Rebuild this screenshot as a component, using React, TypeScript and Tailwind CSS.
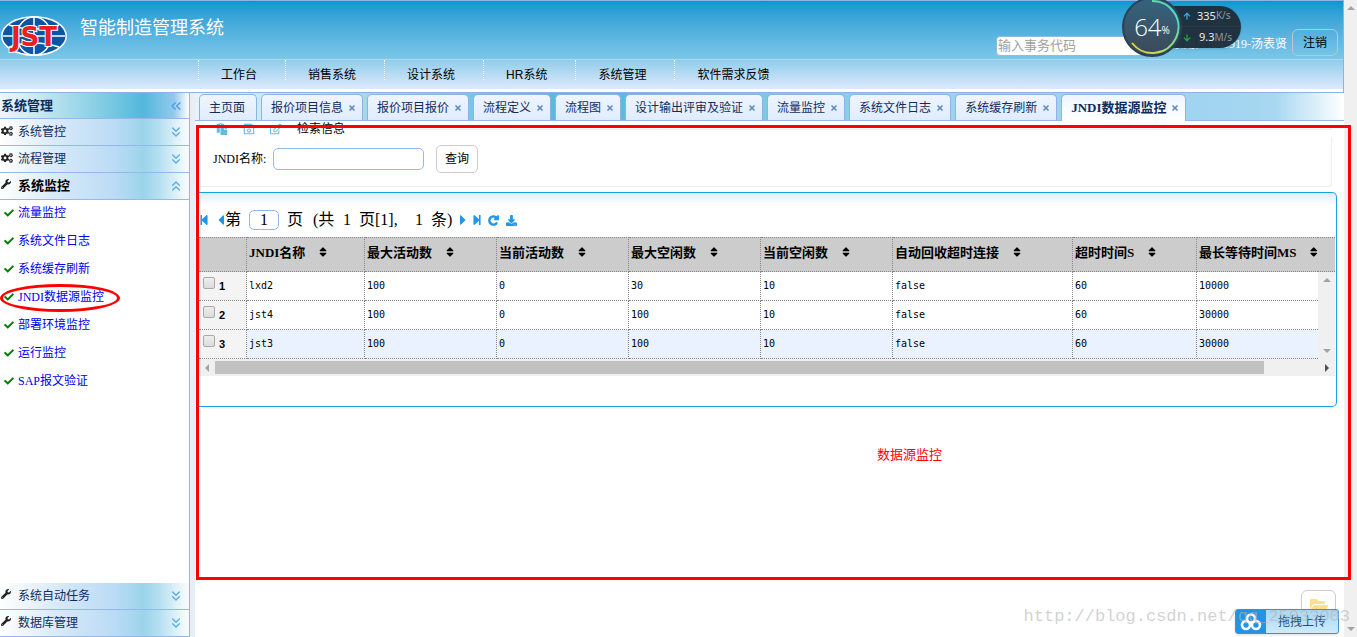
import React from 'react';
import { ChevronsDown, ChevronsLeft, ChevronsUp } from 'lucide-react';
import {
  FaArrowDown,
  FaArrowUp,
  FaCaretLeft,
  FaCaretRight,
  FaCheck,
  FaCogs,
  FaDownload,
  FaFolderOpen,
  FaPaste,
  FaRegEdit,
  FaRegSave,
  FaSort,
  FaStepBackward,
  FaStepForward,
  FaWrench,
} from 'react-icons/fa';
import { FaArrowRotateRight } from 'react-icons/fa6';

const navItems = ['工作台', '销售系统', '设计系统', 'HR系统', '系统管理', '软件需求反馈'];

const links = ['流量监控', '系统文件日志', '系统缓存刷新', 'JNDI数据源监控', '部署环境监控', '运行监控', 'SAP报文验证'];

const tabs = ['主页面', '报价项目信息', '报价项目报价', '流程定义', '流程图', '设计输出评审及验证', '流量监控', '系统文件日志', '系统缓存刷新', 'JNDI数据源监控'];

const columns = [
  { title: 'JNDI名称', width: 'w-[118px]' },
  { title: '最大活动数', width: 'w-[132px]' },
  { title: '当前活动数', width: 'w-[132px]' },
  { title: '最大空闲数', width: 'w-[132px]' },
  { title: '当前空闲数', width: 'w-[132px]' },
  { title: '自动回收超时连接', width: 'w-[180px]' },
  { title: '超时时间S', width: 'w-[124px]' },
  { title: '最长等待时间MS', width: '' },
];

const rows = [
  ['lxd2', '100', '0', '30', '10', 'false', '60', '10000'],
  ['jst4', '100', '0', '100', '10', 'false', '60', '30000'],
  ['jst3', '100', '0', '100', '10', 'false', '60', '30000'],
];

function Logo() {
  return (
    <svg viewBox="0 0 68 42" className="h-[42px] w-[68px] shrink-0">
      <ellipse cx="34" cy="21" rx="33" ry="20" fill="#fff" />
      <ellipse cx="34" cy="21" rx="31.5" ry="18.5" fill="#0a55a5" />
      <g fill="none" stroke="#fff" strokeWidth="1.5">
        <path d="M34 2v38M3 21h62M9 10q25 8 50 0M9 32q25-8 50 0" />
        <ellipse cx="34" cy="21" rx="17" ry="19" />
      </g>
      <text
        x="34"
        y="31"
        textAnchor="middle"
        fill="#ee1c25"
        stroke="#fff"
        strokeWidth="2"
        className="font-['DejaVu_Sans'] text-[26px] font-bold [paint-order:stroke]"
      >
        JST
      </text>
    </svg>
  );
}

function AccordionHeader({ title, icon, open }: { title: string; icon: 'cogs' | 'wrench'; open?: boolean }) {
  return (
    <button
      className={`flex h-[27px] w-full shrink-0 items-center border-b border-[#95b8e7] bg-[linear-gradient(90deg,#fff_0%,#d3e6f8_35%,#b9dbf5_62%,#9bd4ea_76%,#b4dff0_84%,#f4fafd_98%)] pr-[5px] text-left ${
        open ? 'text-[13px] font-bold text-black' : 'text-[#0e2d5f]'
      }`}
    >
      <span className="w-[18px] self-start pt-1.5 pl-px text-[#222]">
        {icon === 'cogs' ? <FaCogs className="h-3 w-3" /> : <FaWrench className="h-2.5 w-2.5" />}
      </span>
      <span className="flex-1">{title}</span>
      {open ? (
        <ChevronsUp className="h-4 w-4 text-[#55aee8]" />
      ) : (
        <ChevronsDown className="h-4 w-4 text-[#55aee8]" />
      )}
    </button>
  );
}

function Sidebar() {
  return (
    <aside className="flex w-[190px] shrink-0 flex-col border-r border-[#95b8e7]">
      <div className="flex h-[26px] shrink-0 items-center justify-between border-b border-[#95b8e7] bg-[linear-gradient(90deg,#eef6fd_0%,#c9e8f3_20%,#8bd0e6_50%,#52b8dc_76%,#94c8ed_92%,#fff_100%)] pr-[5px] pl-px">
        <h2 className="text-[13px] font-bold text-[#0e2d5f]">系统管理</h2>
        <ChevronsLeft className="h-4 w-4 text-[#4c9fe0]" />
      </div>
      <AccordionHeader title="系统管控" icon="cogs" />
      <AccordionHeader title="流程管理" icon="cogs" />
      <AccordionHeader title="系统监控" icon="wrench" open />
      <ul className="flex-1 pt-px">
        {links.map((label) => (
          <li key={label} className="relative mb-1 flex h-6 items-center pl-1">
            <FaCheck className="mr-1 h-2.5 w-2.5 text-[#008000]" />
            <a href="#" className="text-[#0000ee]">
              {label}
            </a>
            {label === 'JNDI数据源监控' && (
              <span className="absolute -top-px left-0 h-7 w-[120px] rounded-[50%] border-3 border-[#fe0000]" />
            )}
          </li>
        ))}
      </ul>
      <AccordionHeader title="系统自动任务" icon="wrench" />
      <AccordionHeader title="数据库管理" icon="wrench" />
    </aside>
  );
}

function SpeedBall() {
  return (
    <div className="absolute top-[-4px] left-[1122px] z-20 h-[60px] w-[119px]">
      <div className="absolute top-[9px] right-0 flex h-[42px] w-[80px] flex-col rounded-r-full bg-[#1d2b38]/95 pl-[22px] font-['Noto_Sans'] text-[11px] text-[#e8eef2] shadow">
        <div className="flex h-[21px] items-center border-b border-[#2b3b48]">
          <FaArrowUp className="h-2 w-2 text-[#36a9ee]" />
          <span className="ml-1.5">335</span>
          <span className="text-[10px] text-[#8d99a3]">K/s</span>
        </div>
        <div className="flex h-[21px] items-center">
          <FaArrowDown className="h-2 w-2 text-[#23a53c]" />
          <span className="ml-2">9.3</span>
          <span className="text-[10px] text-[#8d99a3]">M/s</span>
        </div>
      </div>
      <svg viewBox="0 0 60 60" className="absolute top-0 left-0 h-[60px] w-[60px]">
        <defs>
          <linearGradient id="ring" x1="1" y1="0" x2="0" y2="1">
            <stop offset="0" stopColor="#2ed6e6" />
            <stop offset=".5" stopColor="#8fe07c" />
            <stop offset="1" stopColor="#f0cf3c" />
          </linearGradient>
          <linearGradient id="ball" x1="0" y1="0" x2="0" y2="1">
            <stop offset="0" stopColor="#34647f" />
            <stop offset="1" stopColor="#3c4857" />
          </linearGradient>
        </defs>
        <circle cx="30" cy="30" r="29" fill="url(#ball)" stroke="#2b4254" strokeWidth="2" />
        <path d="M30 4A26 26 0 1 1 10 46" fill="none" stroke="url(#ring)" strokeWidth="2" />
      </svg>
      <div className="absolute top-0 left-0 flex h-[60px] w-[60px] items-center justify-center font-['Open_Sans'] text-white">
        <span className="text-2xl font-light">64</span>
        <span className="pt-2 text-[10px]">%</span>
      </div>
    </div>
  );
}

function Header() {
  return (
    <header className="relative border-y border-r border-[#8db2e3] bg-white pb-[3px]">
      <div className="flex h-[58px] items-center bg-linear-to-b from-[#0698d1] to-[#7cc7e8] pr-[5px]">
        <div className="flex flex-1 items-center gap-3 pt-3">
          <Logo />
          <h1 className="pb-4 text-[18px] text-white">智能制造管理系统</h1>
        </div>
        <div className="flex items-end self-end pb-[3px]">
          <input
            aria-label="输入事务代码"
            placeholder="输入事务代码"
            className="mr-2 h-5 w-[151px] rounded border border-[#95b8e7] bg-white px-px text-[13px] placeholder:text-[#a0a0a0]"
          />
          <span className="mr-[5px] w-[132px] text-right leading-6 whitespace-nowrap text-white">登录用户:003919-汤表贤</span>
          <button className="h-[27px] w-[46px] rounded-md border border-[#bcc8cc] text-black">注销</button>
        </div>
      </div>
      <nav className="flex h-[30px] items-start border-t border-[#a9dbf2] bg-linear-to-b from-[#90cdea] to-[#dde9fd] pl-[198px] font-['Liberation_Sans','Noto_Sans_CJK_SC',sans-serif]">
        {navItems.map((item) => (
          <a key={item} href="#" className="h-5 border-l border-dotted border-white pt-1.5 pr-7 pl-[22px] leading-[18px] text-black">
            {item}
          </a>
        ))}
      </nav>
      <SpeedBall />
    </header>
  );
}

function TabBar() {
  return (
    <div className="flex h-7 shrink-0 items-end gap-1 border-b border-[#95b8e7] bg-[linear-gradient(90deg,#e6f3fb_0%,#a3d8ec_15%,#56bbdf_31%,#5abddf_38%,#7ccae6_50%,#9ad3ee_65%,#a0d4f0_88%,#a8d8f1_94%,#fff_100%)] pl-1">
      {tabs.map((tab, i) => {
        const active = i === tabs.length - 1;
        return (
          <div
            key={tab}
            className={`flex items-center gap-1 rounded-t-[5px] border border-b-0 border-[#8db2e3] pl-[9px] whitespace-nowrap text-[#0e2d5f] ${
              active
                ? '-mb-px h-[27px] bg-linear-to-b from-[#eff5ff] to-white text-[13px] font-bold'
                : 'h-[26px] bg-linear-to-b from-[#eff5ff] to-[#e0ecff]'
            } ${i === 0 ? 'pr-[11px]' : 'pr-[5px]'}`}
          >
            <a href="#">{tab}</a>
            {i > 0 && (
              <button aria-label={`关闭${tab}`} className="flex h-2.5 w-2.5 items-center justify-center">
                <svg viewBox="0 0 8 8" className="h-2 w-2">
                  <path d="M1.5 1.5l5 5M6.5 1.5l-5 5" stroke="#5c86c0" strokeWidth="1.5" />
                </svg>
              </button>
            )}
          </div>
        );
      })}
    </div>
  );
}

function SearchForm() {
  return (
    <section className="mr-3">
      <div className="flex h-4 items-center gap-[15px] pl-[17px] text-[#62bddf]">
        <FaPaste className="h-3 w-3" />
        <FaRegSave className="h-3 w-3" />
        <FaRegEdit className="h-3 w-3" />
        <h2 className="text-black">检索信息</h2>
        <span className="h-px flex-1 bg-[#eee]" />
      </div>
      <form className="flex h-[50px] items-start rounded-b border-r border-b border-[#eee] pt-2 pl-3.5">
        <label htmlFor="jndi" className="w-[60px] leading-7">
          JNDI名称:
        </label>
        <input id="jndi" className="mt-[3px] h-[22px] w-[151px] rounded-[5px] border border-[#95b8e7] px-1" />
        <button type="button" className="ml-3 h-7 w-[42px] rounded-[5px] border border-[#ccc] text-black">
          查询
        </button>
      </form>
    </section>
  );
}

function Pager() {
  return (
    <div className="flex h-11 items-center pt-2.5 text-[16px] text-black">
      <button aria-label="首页" className="w-[13px] text-[#1e96ea]">
        <FaStepBackward className="h-3 w-2.5" />
      </button>
      <button aria-label="上一页" className="w-3 pl-1 text-[#1e96ea]">
        <FaCaretLeft className="h-4 w-2.5" />
      </button>
      <label htmlFor="page" className="ml-px">第</label>
      <input
        id="page"
        defaultValue="1"
        className="mx-2 h-5 w-[30px] rounded-[5px] border border-[#95b8e7] text-center"
      />
      <span className="w-[26px]">页</span>
      <span className="w-[30px]">(共</span>
      <span className="w-4">1</span>
      <span className="w-14">页[1],</span>
      <span className="w-4">1</span>
      <span className="w-[27px]">条)</span>
      <button aria-label="下一页" className="w-[14px] text-[#1e96ea]">
        <FaCaretRight className="h-4 w-2.5" />
      </button>
      <button aria-label="末页" className="w-4 text-[#1e96ea]">
        <FaStepForward className="h-3 w-2.5" />
      </button>
      <button aria-label="刷新" className="w-[18px] text-[#1e96ea]">
        <FaArrowRotateRight className="h-[11px] w-[11px] [stroke-width:50] [stroke:currentColor]" />
      </button>
      <button aria-label="下载" className="text-[#1e96ea]">
        <FaDownload className="h-[11px] w-[11px]" />
      </button>
    </div>
  );
}

function DataGrid() {
  return (
    <>
      <table className="w-full table-fixed border-separate border-spacing-0 text-left">
        <thead className="bg-[#ccc]">
          <tr className="h-[35px]">
            <th className="w-12 border-t border-r border-b border-dotted border-[#888]" />
            {columns.map((col, i) => (
              <th
                key={col.title}
                className={`border-t border-b border-dotted border-[#888] p-0 pb-1 pl-[2px] ${col.width} ${
                  i < columns.length - 1 ? 'border-r' : ''
                }`}
              >
                <span className="flex items-center text-[13px] font-bold whitespace-nowrap text-black">
                  {col.title}
                  <FaSort className="ml-3 h-3 w-3" />
                </span>
              </th>
            ))}
            <th className="w-[17px] border-t border-b border-dotted border-[#888] p-0" />
          </tr>
        </thead>
        <tbody>
          {rows.map((row, r) => (
            <tr key={row[0]} className={`h-[29px] ${r === 2 ? 'bg-[#eaf2ff]' : 'bg-white'}`}>
              <td className="border-r border-b border-dotted border-[#888] bg-[#f4f4f4] p-0 pl-1 font-['Liberation_Sans'] text-[11px] font-bold">
                <label className="flex items-center gap-1">
                  <input
                    type="checkbox"
                    className="mb-1.5 h-3 w-3 appearance-none rounded-[2px] border border-[#a9a9a9] bg-linear-to-b from-[#eee] to-[#dcdcdc]"
                  />
                  {r + 1}
                </label>
              </td>
              {row.map((cell, c) => (
                <td
                  key={c}
                  className={`border-b border-dotted border-[#888] p-0 pl-[2px] font-['DejaVu_Sans_Mono'] text-[10px] text-black ${
                    c < row.length - 1 ? 'border-r' : ''
                  }`}
                >
                  {cell}
                </td>
              ))}
              {r === 0 && (
                <td rowSpan={3} className="bg-[#f0f0f0] p-0">
                  <div className="flex h-[87px] flex-col items-center justify-between py-1.5">
                    <span className="border-x-4 border-b-4 border-x-transparent border-b-[#a3a3a3]" />
                    <span className="border-x-4 border-t-4 border-x-transparent border-t-[#a3a3a3]" />
                  </div>
                </td>
              )}
            </tr>
          ))}
        </tbody>
      </table>
      <div className="flex h-[17px] items-center bg-[#f0f0f0] px-1.5">
        <span className="border-y-4 border-r-4 border-y-transparent border-r-[#a3a3a3]" />
        <span className="mx-1.5 flex-1">
          <span className="block h-[13px] w-[95%] bg-[#c1c1c1]" />
        </span>
        <span className="border-y-4 border-l-4 border-y-transparent border-l-[#505050]" />
      </div>
    </>
  );
}

export default function App() {
  return (
    <div className="flex h-screen overflow-hidden bg-white font-['Liberation_Serif','Noto_Sans_CJK_SC',sans-serif] text-xs">
      <div className="flex min-w-0 flex-1 flex-col">
        <Header />
        <div className="flex min-h-0 flex-1">
          <Sidebar />
          <div className="w-[5px] shrink-0 bg-[#e6eef8]" />
          <main className="relative flex min-w-0 flex-1 flex-col">
            <TabBar />
            <div className="pl-1">
              <SearchForm />
              <div className="mt-[5px] mr-[7px] h-[215px] rounded-r-[5px] border border-l-0 border-[#1ba1e2] bg-[linear-gradient(180deg,#e0ecff_0px,#fff_12px)] pr-px">
                <Pager />
                <DataGrid />
              </div>
              <p className="mt-[38px] pl-[678px] text-[13px] leading-5 text-[#fe0000]">数据源监控</p>
            </div>
            <div className="pointer-events-none absolute top-8 -right-[7px] bottom-[57px] left-px z-10 border-3 border-[#fe0000]" />
            <button aria-label="打开文件夹" className="absolute right-2 bottom-3.5 flex h-[33px] w-[35px] justify-center rounded-md border border-[#ccc] bg-white pt-1.5">
              <FaFolderOpen className="h-4 w-[18px] text-[#ffe08a]" />
            </button>
            <button className="absolute right-[5px] bottom-[3px] flex h-[25px] w-[104px] items-center rounded-[3px] border border-[#3b94d0] bg-linear-to-b from-[#a8d8f7] to-[#cdebfc] text-[#1e5078] shadow">
              <span className="flex h-full w-[30px] items-center justify-center bg-[#2393e3]">
                <svg viewBox="0 0 22 18" className="h-[18px] w-[22px]" fill="none" stroke="#fff" strokeWidth="2.6">
                  <circle cx="11" cy="5.5" r="4" />
                  <circle cx="6" cy="12" r="4" />
                  <circle cx="16" cy="12" r="4" />
                </svg>
              </span>
              <span className="flex-1 text-center">拖拽上传</span>
            </button>
            <p className="pointer-events-none absolute -right-[6px] bottom-2 z-20 font-['Liberation_Mono'] text-[17px] leading-6 text-[#b4b4b4]/60">
              http://blog.csdn.net/qq_25033003
            </p>
          </main>
        </div>
      </div>
      <div className="flex w-[13px] shrink-0 flex-col items-center justify-between bg-[#f0f0f0] py-1.5">
        <span className="border-x-4 border-b-4 border-x-transparent border-b-[#a3a3a3]" />
        <span className="border-x-4 border-t-4 border-x-transparent border-t-[#a3a3a3]" />
      </div>
    </div>
  );
}
